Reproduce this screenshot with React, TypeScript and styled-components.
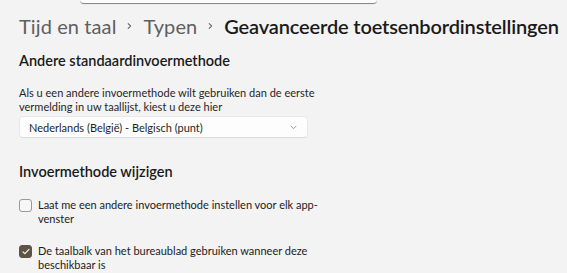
import React from 'react';
import styled, {createGlobalStyle} from 'styled-components';

const GlobalStyle = createGlobalStyle`
  html, body {
    margin: 0;
    padding: 0;
    background: #f3f3f3;
  }
  body {
    font-family: "Lato", "Open Sans", sans-serif;
    color: #1b1b1b;
  }
`;

const Page = styled.div`
  width: 567px;
  height: 273px;
  overflow: hidden;
  display: flex;
  flex-direction: column;
  padding: 0 19px;
  box-sizing: border-box;

  & > * {
    flex: none;
  }
`;

const TopBar = styled.div`
  display: flex;
  height: 5px;
  padding-left: 61px;
`;

// onderrand van het zoekveld dat net boven de kruimels uitsteekt
const SearchEdge = styled.div`
  width: 297px;
  height: 4px;
  box-sizing: border-box;
  background: #fcfcfc;
  border-bottom: 1px solid #8a8a8a;
  border-radius: 0 0 5px 5px;
  box-shadow: 0 1px 0 rgba(0, 0, 0, 0.04);
`;

const Breadcrumb = styled.nav`
  display: flex;
  align-items: center;
  gap: 11px;
  margin-top: 6px;
  height: 30px;
  font-size: 20px;
  white-space: nowrap;

  & > * {
    flex: none;
  }
`;

const Crumb = styled.span<{$current?: boolean}>`
  color: ${p => (p.$current ? '#1a1a1a' : '#5f5f5f')};
  font-weight: ${p => (p.$current ? 600 : 400)};
  letter-spacing: ${p => (p.$current ? '-0.15px' : '0.1px')};
`;

const Section = styled.section`
  display: flex;
  flex-direction: column;
`;

const SectionTitle = styled.h2<{$top: number}>`
  margin: ${p => p.$top}px 0 0;
  font-size: 14.5px;
  font-weight: 600;
  line-height: 18px;
  color: #1a1a1a;
`;

const Description = styled.p`
  margin: 16px 0 0;
  width: 300px;
  font-size: 11px;
  line-height: 14px;
  color: #262626;
`;

const Select = styled.div`
  margin-top: 2px;
  width: 289px;
  height: 22px;
  box-sizing: border-box;
  display: flex;
  align-items: center;
  justify-content: space-between;
  padding: 0 10px 0 9px;
  background: #fdfdfd;
  border: 1px solid #e8e8e8;
  border-bottom-color: #dcdcdc;
  border-radius: 4px;
  font-size: 11px;
  color: #1f1f1f;
`;

const OptionList = styled.div`
  display: flex;
  flex-direction: column;
  gap: 19px;
  margin-top: 17px;
`;

const OptionRow = styled.label`
  display: flex;
  align-items: flex-start;
  gap: 6px;
`;

const Box = styled.span<{$checked?: boolean}>`
  flex: none;
  width: 13px;
  height: 13px;
  margin-top: 1px;
  box-sizing: border-box;
  border-radius: 3px;
  display: flex;
  align-items: center;
  justify-content: center;
  background: ${p => (p.$checked ? '#5f5346' : '#f7f7f7')};
  border: 1px solid ${p => (p.$checked ? '#5f5346' : '#999999')};
`;

const OptionText = styled.span`
  width: 285px;
  font-size: 11px;
  line-height: 13.5px;
  color: #1b1b1b;
`;

const Chevron = ({color}: {color: string}) => (
  <svg width="5" height="10" viewBox="0 0 5 10" fill="none">
    <path d="M1.2 2.6l2.4 2.4-2.4 2.4" stroke={color} strokeWidth="1.1" strokeLinecap="round" strokeLinejoin="round"/>
  </svg>
);

const DownChevron = () => (
  <svg width="7" height="5" viewBox="0 0 7 5" fill="none">
    <path d="M1 1.2l2.5 2.5L6 1.2" stroke="#8a8a8a" strokeWidth="0.9" strokeLinecap="round" strokeLinejoin="round"/>
  </svg>
);

const Check = () => (
  <svg width="8" height="7" viewBox="0 0 8 7" fill="none">
    <path d="M1 3.8l1.9 1.8L7 1.4" stroke="#ffffff" strokeWidth="1.1" strokeLinecap="round" strokeLinejoin="round"/>
  </svg>
);

const App: React.FC = () => {
  return (
    <>
      <GlobalStyle/>
      <Page>
        <TopBar>
          <SearchEdge/>
        </TopBar>
        <Breadcrumb>
          <Crumb>Tijd en taal</Crumb>
          <Chevron color="#6b6b6b"/>
          <Crumb>Typen</Crumb>
          <Chevron color="#6b6b6b"/>
          <Crumb $current>Geavanceerde toetsenbordinstellingen</Crumb>
        </Breadcrumb>

        <Section>
          <SectionTitle $top={11}>Andere standaardinvoermethode</SectionTitle>
          <Description>
            Als u een andere invoermethode wilt gebruiken dan de eerste vermelding in uw taallijst, kiest u deze hier
          </Description>
          <Select>
            <span>Nederlands (België) - Belgisch (punt)</span>
            <DownChevron/>
          </Select>
        </Section>

        <Section>
          <SectionTitle $top={25}>Invoermethode wijzigen</SectionTitle>
          <OptionList>
            <OptionRow>
              <Box/>
              <OptionText>Laat me een andere invoermethode instellen voor elk app-venster</OptionText>
            </OptionRow>
            <OptionRow>
              <Box $checked><Check/></Box>
              <OptionText>De taalbalk van het bureaublad gebruiken wanneer deze beschikbaar is</OptionText>
            </OptionRow>
          </OptionList>
        </Section>
      </Page>
    </>
  );
};

export default App;
